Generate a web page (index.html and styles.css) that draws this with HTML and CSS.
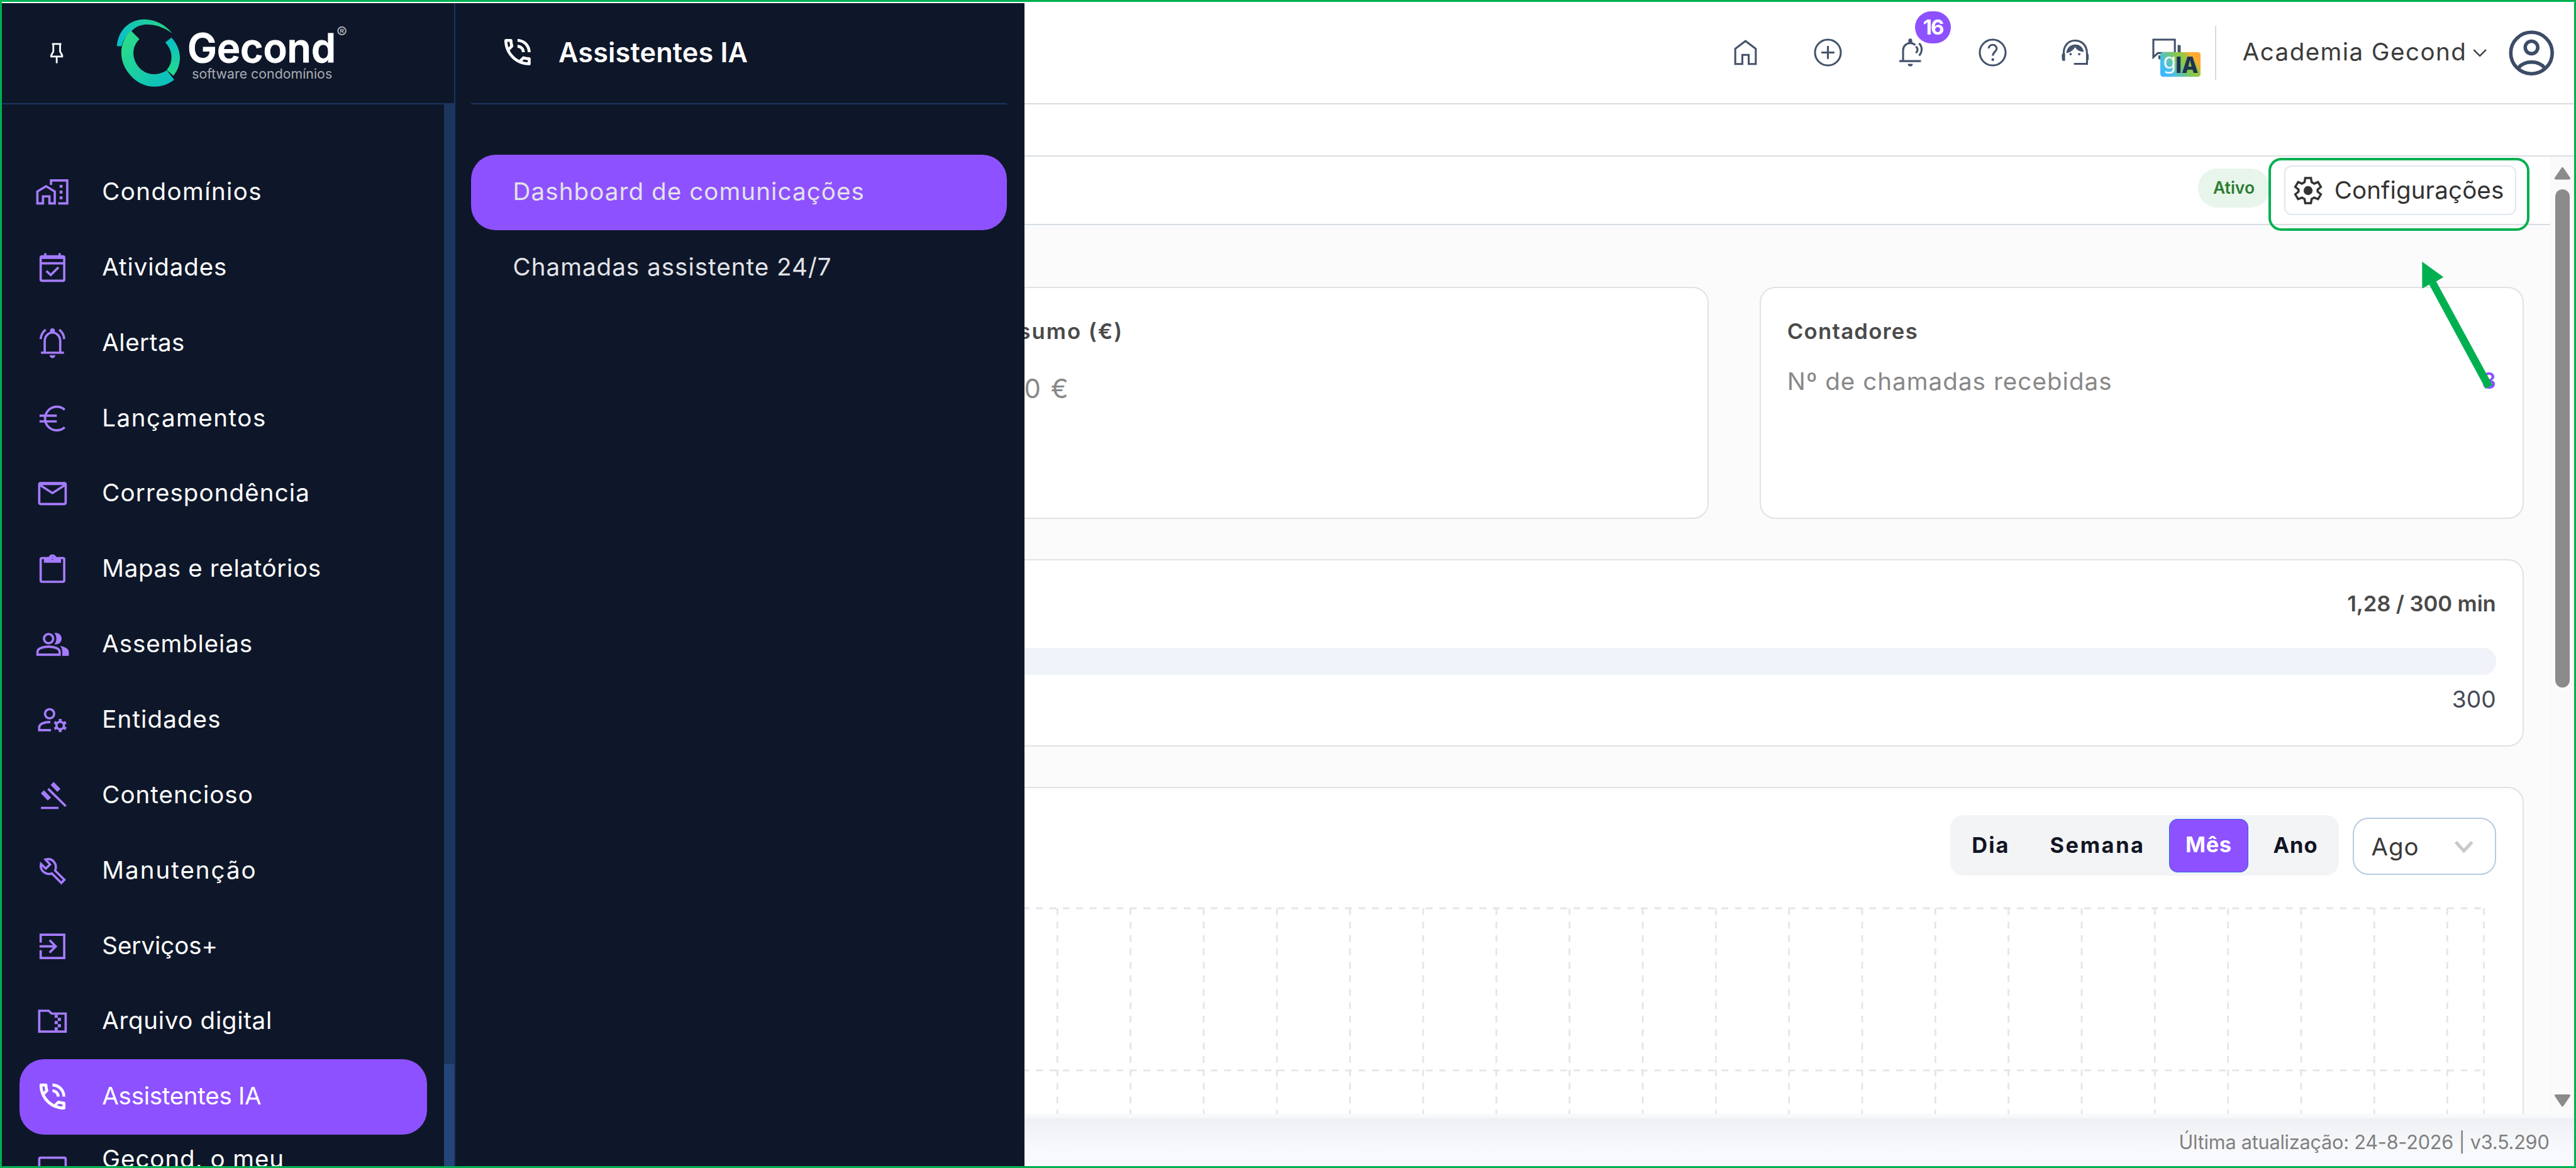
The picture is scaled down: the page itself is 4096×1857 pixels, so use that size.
FILE: index.html
```html
<!DOCTYPE html>
<html lang="pt">
<head>
<meta charset="utf-8">
<title>Gecond – Dashboard de comunicações</title>
<link rel="stylesheet" href="styles.css">
</head>
<body>
<div class="screen">

  <aside class="sidebar">
    <header class="brand">
      <svg class="pin" viewBox="0 0 24 36"><path d="M4 2H20M6.2 2V15L2.6 21.5V23.5H21.4V21.5L17.8 15V2M12 23.5V35"/></svg>
      <svg class="logo" viewBox="0 0 1260 405" role="img" aria-label="Gecond software condomínios">
        <defs>
          <linearGradient id="g1" x1="0" y1="0" x2="1" y2="1"><stop offset=".1" stop-color="#2adc88"/><stop offset="1" stop-color="#08bcc6"/></linearGradient>
          <linearGradient id="g2" x1="0" y1=".6" x2="1" y2=".4"><stop offset="0" stop-color="#0abfc8"/><stop offset="1" stop-color="#28d486"/></linearGradient>
          <linearGradient id="g3" x1="0" y1="0" x2="0" y2="1"><stop offset="0" stop-color="#07bdc8"/><stop offset="1" stop-color="#27dc8a"/></linearGradient>
        </defs>
        <path fill="url(#g2)" d="M32 166C38 84 96 28 175 28C235 30 285 60 316 100C270 66 220 52 175 55C142 60 122 72 108 88C80 110 62 140 56 166Z"/>
        <path fill="url(#g1)" d="M104 86L148 130C104 170 108 236 150 280C188 318 245 318 288 290L326 338C262 390 170 385 110 325C36 250 38 150 104 86Z"/>
        <path fill="url(#g3)" d="M280 147L312 122C366 180 370 260 322 318L288 288C325 245 318 185 280 147Z"/>
        <text class="logo-name" x="394" y="248" textLength="762" lengthAdjust="spacingAndGlyphs">Gecond</text>
        <text class="logo-sub" x="417" y="331" textLength="720" lengthAdjust="spacingAndGlyphs">software condomínios</text>
        <text class="logo-reg" x="1160" y="124">®</text>
      </svg>
    </header>
    <div class="nav-wrap">
      <nav class="nav">
        <a class="item"><svg class="ic" viewBox="0 0 24 24"><path d="M1.5 19.9V11.6L7.55 7.9L13.6 11.6V19.9H9.9V15H5.4V19.9ZM11 7V3.9H22.3V19.9H16"/><path class="f" d="M17 7h2v2h-2zM17 11h2v2h-2zM17 15h2v2h-2z"/></svg><span class="ls57">Condomínios</span></a>
        <a class="item"><svg class="ic" viewBox="0 0 24 24"><rect x="3.8" y="4.2" width="16.4" height="17" rx="1"/><path d="M3.8 9H20.2M7 4.2V2M17 4.2V2M7.8 14.4L10.8 17.2L16.2 11.8"/><path class="f" d="M4 4h16v2H4z"/></svg><span class="ls43">Atividades</span></a>
        <a class="item"><svg class="ic" viewBox="0 0 24 24"><path d="M6.6 18.6V10.6a5.4 5.9 0 0 1 10.8 0V18.6M4 18.7H20M3.8 9.2C4 6.4 5.2 4.300 7.300 2.700M20.200 9.200C20 6.400 18.800 4.300 16.700 2.700"/><path class="f" d="M10.300 5.200V3.400a1.700 1.700 0 0 1 3.400 0V5.200zM10 20.500h4a2 2 0 0 1-4 0z"/></svg><span class="ls33">Alertas</span></a>
        <a class="item"><svg class="ic" viewBox="0 0 24 24"><path d="M20.5 5.900A8.200 8.200 0 1 0 20.500 18.100M3 10H15M3 14H15"/></svg><span class="ls60">Lançamentos</span></a>
        <a class="item"><svg class="ic" viewBox="0 0 24 24"><rect x="2.800" y="4.800" width="18.400" height="14.600" rx="1"/><path d="M3 6L12 11.800L21 6"/><path class="f" d="M3 4.500h18v1.700H3z"/></svg><span class="ls49">Correspondência</span></a>
        <a class="item"><svg class="ic" viewBox="0 0 24 24"><rect x="3.800" y="4.500" width="16.400" height="16.500" rx="1"/><path class="f" fill-rule="evenodd" d="M6 4H9.300a2.800 2.800 0 0 1 5.400 0H18V7.800H6zM12 3.600a1 1 0 1 0 .01 0z"/></svg><span class="ls37">Mapas e relatórios</span></a>
        <a class="item"><svg class="ic" viewBox="0 0 24 24"><circle cx="9.300" cy="8" r="3.200"/><path d="M1.600 19.200V17.200C1.600 14.600 6 13.600 9.300 13.600S17 14.600 17 17.200V19.200Z"/><path class="f" d="M13.300 4.200a4 4 0 1 1 0 7.700c1.900-2 1.900-5.700 0-7.700zM17.300 13.100C20.500 13.700 23.400 15 23.400 17.300V20H18.800V17C18.800 15.300 18.200 14.100 17.300 13.100z"/></svg><span class="ls43">Assembleias</span></a>
        <a class="item"><svg class="ic" viewBox="0 0 24 24"><circle cx="10" cy="7.800" r="3.200"/><path d="M11 19.200H2.800V17.200C2.800 14.800 6.500 13.500 10.500 13.500"/><circle cx="17.400" cy="16" r="2.600"/><path stroke-width="2" d="M17.400 11.400v1.800M17.400 18.800v1.800M13.400 13.700l1.600.900M19.800 17.400l1.600.9M13.400 18.300l1.600-.9M19.800 14.600l1.600-.9"/></svg><span class="ls49">Entidades</span></a>
        <a class="item"><svg class="ic" viewBox="0 0 24 24"><path d="M4 20.800H16.200M9 7.500L21.300 19.600"/><path stroke-width="3" d="M11.800 3.800L16.500 8.600M5 9.600L9.900 14.600"/></svg><span class="ls47">Contencioso</span></a>
        <a class="item"><svg class="ic" viewBox="0 0 24 24"><path d="M13.900 11.900L20.300 18.300L18.200 20.500L11.600 13.900C7.500 15.200 3 12 4 7.300L7.400 10.500L10.300 7.600L7.200 4.200C12 2.700 15.600 7.200 13.900 11.900Z"/></svg><span class="ls72">Manutenção</span></a>
        <a class="item"><svg class="ic" viewBox="0 0 24 24"><path d="M3.800 9.500V4H20.200V20.200H3.800V14.800M3 12.100H14.200M10 7.800L14.300 12.100L10 16.400"/></svg><span class="ls19">Serviços+</span></a>
        <a class="item"><svg class="ic" viewBox="0 0 24 24"><path d="M2.800 19.300V4.800H9.400L11.400 6.800H21.200V19.300Z"/><path class="f" d="M13.500 7.500h2.200v2.200h-2.200zM15.700 9.700h2.200v2.200h-2.200zM13.500 11.900h2.200v2.200h-2.200zM15.700 14.100h2.200v2.200h-2.200zM13.500 16.300h2.200v2.200h-2.200z"/></svg><span class="ls38">Arquivo digital</span></a>
        <a class="item active"><svg class="ic" viewBox="0 0 24 24"><use href="#phone"/></svg><span class="ls13">Assistentes IA</span></a>
        <a class="item last"><svg class="ic" viewBox="0 0 24 24"><rect x="2.800" y="3.800" width="18.400" height="14" rx="1"/></svg><span class="ls45">Gecond, o meu</span></a>
      </nav>
      <div class="nav-scroll"><div class="nav-thumb"></div></div>
    </div>
  </aside>

  <section class="flyout">
    <header class="fly-head">
      <svg class="ic big" viewBox="0 0 24 24"><path id="phone" class="f" d="M19 12h2c0-4.970-4.030-9-9-9v2c3.870 0 7 3.130 7 7zm-4 0h2c0-2.760-2.240-5-5-5v2c1.660 0 3 1.340 3 3zM20 15.500c-1.250 0-2.450-.2-3.570-.57-.1-.03-.21-.05-.31-.05-.26 0-.51.1-.71.29l-2.200 2.200c-2.830-1.440-5.150-3.750-6.590-6.590l2.200-2.210c.28-.26.36-.65.25-1C8.700 6.450 8.500 5.250 8.500 4c0-.55-.45-1-1-1H4c-.55 0-1 .45-1 1 0 9.390 7.610 17 17 17 .55 0 1-.45 1-1v-3.500c0-.55-.45-1-1-1zM5.030 5h1.500c.07.88.22 1.750.46 2.590L5.790 8.800c-.41-1.210-.67-2.480-.76-3.800zM19 18.970c-1.320-.09-2.600-.35-3.800-.76l1.200-1.200c.85.24 1.720.39 2.600.45v1.510z"/></svg>
      <h2 class="ls25">Assistentes IA</h2>
    </header>
    <a class="sub active ls49">Dashboard de comunicações</a>
    <a class="sub ls47">Chamadas assistente 24/7</a>
  </section>

  <main class="main">
    <header class="topbar">
      <svg class="tic" viewBox="0 0 24 24"><path d="M4.600 20.300V9.300L12 3.700l7.400 5.600v11h-5.100v-6.600H9.700v6.600z"/></svg>
      <svg class="tic" viewBox="0 0 24 24"><circle cx="12" cy="12" r="9.300"/><path d="M12 7.300v9.400M7.300 12h9.400"/></svg>
      <div class="bell">
        <svg class="tic" viewBox="0 0 24 24"><path d="M4.100 18.200H19.700M6.800 18V10.500C6.800 7.500 9 5.200 12 5.200C13.500 5.200 14.600 5.700 15.600 6.600M18.400 5.400C20.800 8 20.800 11.600 18.400 14.200M16 7.600C17.700 9.200 17.700 10.700 16 12.300"/><path class="f" d="M10.600 5.500V3.300a1.400 1.400 0 0 1 2.800 0V5.500zM10.200 20.200h3.600a1.800 1.800 0 0 1-3.600 0z"/></svg>
        <span class="count">16</span>
      </div>
      <svg class="tic" viewBox="0 0 24 24"><circle cx="12" cy="12" r="9.300"/><path d="M9.100 9.100a2.900 2.700 0 0 1 5.800.1c0 2.100-2.800 2.600-2.800 5.100"/><circle class="f" cx="12.100" cy="17.100" r="1"/></svg>
      <svg class="tic" viewBox="0 0 24 24"><path d="M3.900 14.200C3.200 7.600 6.700 3.400 12 3.400S20.600 7.400 20.600 12.600V20.200H11.200"/><path class="f" d="M5.700 12.500C5.900 8.700 8.600 6.200 12 6.200c3.400 0 5.700 2.200 6.300 5.200C15.600 11.500 13.300 10.200 11.900 8.200C10.600 10.600 8.500 12 5.700 12.500zM4.800 12.600V18H3.600a1 1 0 0 1-1-1.100L2.400 14a1.400 1.400 0 0 1 1-1.400zM20 12.600h.8a1.400 1.400 0 0 1 1 1.400v2.500a1 1 0 0 1-1 1.200H20z"/><circle class="f" cx="8.800" cy="13.200" r=".9"/><circle class="f" cx="15" cy="13.200" r=".9"/></svg>
      <div class="chat">
        <svg class="tic" viewBox="0 0 24 24"><path d="M2.700 15.400V2.700H18.200V12.400H6Z"/><path class="f" d="M20.200 6.600h1.400a.8.8 0 0 1 .8.8V16h-2.200zM6.300 14h3v3H7.600a1.300 1.300 0 0 1-1.300-1.300z"/></svg>
        <svg class="gia" viewBox="0 0 69 42"><defs><linearGradient id="gb" x1="0" y1=".7" x2="1" y2=".2"><stop offset="0" stop-color="#3db8ff"/><stop offset=".2" stop-color="#4cbfe0"/><stop offset=".55" stop-color="#85c94c"/><stop offset=".72" stop-color="#a4c440"/><stop offset=".86" stop-color="#ffab33"/><stop offset="1" stop-color="#ffa72e"/></linearGradient></defs><rect width="69" height="42" rx="5" fill="url(#gb)"/><text class="gia-g" x="4.500" y="28">g</text><text class="gia-ia" x="26" y="35" textLength="39" lengthAdjust="spacingAndGlyphs">IA</text></svg>
      </div>
      <div class="account">
        <span class="ls58">Academia Gecond</span>
        <svg class="chev" viewBox="0 0 24 24"><path d="M1.500 6.500L12 17L22.500 6.500"/></svg>
        <svg class="avatar" viewBox="0 0 78 78"><circle cx="39" cy="39" r="35.500"/><circle cx="39" cy="29.500" r="10.700"/><path d="M16 65C27 51 51 51 62 65"/></svg>
      </div>
    </header>
    <div class="subbar"></div>

    <div class="body">
      <div class="content">
        <div class="titlebar">
          <span class="badge">Ativo</span>
          <div class="config">
            <svg class="gear" viewBox="0 0 24 24"><path d="M9.900 2.800h4.200l.5 3 1.900 1.100 2.800-1.200 2.100 3.600-2.400 1.900v1.600l2.400 1.900-2.100 3.600-2.800-1.200-1.900 1.100-.5 3H9.900l-.5-3-1.900-1.100-2.800 1.200-2.100-3.600L5 12.800v-1.600L2.600 9.300l2.100-3.600 2.800 1.200 1.900-1.100z"/><circle class="f" cx="12" cy="12" r="3.300"/></svg>
            <span class="ls24">Configurações</span>
            <div class="highlight"></div>
          </div>
        </div>
        <div class="cards">
          <article class="card"><h3 class="ls82">Consumo (€)</h3><p class="amount">0,00 €</p></article>
          <article class="card"><h3 class="ls58">Contadores</h3><p class="counter"><span class="ls48">Nº de chamadas recebidas</span><b>3</b></p></article>
        </div>
        <article class="card usage">
          <p class="total ls18">1,28 / 300 min</p>
          <div class="bar"></div>
          <p class="max">300</p>
        </article>
        <article class="card chart">
          <div class="filters">
            <div class="seg"><span class="dia">Dia</span><span class="sem">Semana</span><span class="mes">Mês</span><span class="ano">Ano</span></div>
            <div class="select"><span class="ls45">Ago</span><svg class="chev grey" viewBox="0 0 34 24"><path d="M3 4L17 19L31 4"/></svg></div>
          </div>
          <svg class="grid" viewBox="1662 1540 2607 380">
            <path stroke-dashoffset="-3" d="M1676 1554H4249M1676 1831.500H4249"/>
            <path d="M1807.600 1554V1930M1932.800 1554V1930M2058 1554V1930M2183.200 1554V1930M2308.400 1554V1930M2433.600 1554V1930M2558.800 1554V1930M2684 1554V1930M2809.200 1554V1930M2934.400 1554V1930M3059.600 1554V1930M3184.800 1554V1930M3310 1554V1930M3435.200 1554V1930M3560.400 1554V1930M3685.600 1554V1930M3810.800 1554V1930M3936 1554V1930M4061.200 1554V1930M4186 1554V1930M4248.500 1554V1930"/>
          </svg>
        </article>
      </div>
      <div class="scroll">
        <svg class="tri" viewBox="0 0 29 23"><path d="M14.500 3L26 20H3Z"/></svg>
        <div class="thumb"></div>
        <svg class="tri down" viewBox="0 0 29 23"><path d="M14.500 20L26 3H3Z"/></svg>
      </div>
    </div>
    <footer class="foot">Última atualização: 24-8-2026 | v3.5.290</footer>
  </main>

  <svg class="arrow" viewBox="4130 440 150 240"><path d="M4145.400 448.700L4182 475L4169.500 482.500L4266 659.700L4254 666L4157.600 488L4145.500 494.500Z"/></svg>
</div>
</body>
</html>
```
FILE: styles.css
```css
html { font-size: 92.92px; }
* { box-sizing: border-box; margin: 0; padding: 0; }
body { font-family: Inter, "Open Sans", sans-serif; font-size: .415rem; overflow: hidden; background: #fff; }
svg { display: block; flex: none; }

.screen {
  position: relative;
  height: 100vh;
  display: grid;
  grid-template-columns: 7.755rem 9.74rem minmax(0, 1fr);
  grid-template-rows: minmax(0, 1fr);
  border: .04rem solid #00b050;
  border-left-width: .035rem;
  border-right-width: .035rem;
  padding-top: .02rem;
}

/* letter-spacing steps for the labels */
.ls13 { letter-spacing: -.008em; } .ls18 { letter-spacing: -.003em; }
.ls19 { letter-spacing: -.002em; } .ls24 { letter-spacing: .003em; }
.ls25 { letter-spacing: .004em; }  .ls33 { letter-spacing: .012em; }
.ls37 { letter-spacing: .016em; }  .ls38 { letter-spacing: .017em; }
.ls43 { letter-spacing: .022em; }  .ls45 { letter-spacing: .024em; }
.ls47 { letter-spacing: .026em; }  .ls48 { letter-spacing: .027em; }
.ls49 { letter-spacing: .028em; }  .ls57 { letter-spacing: .036em; }
.ls58 { letter-spacing: .037em; }  .ls60 { letter-spacing: .039em; }
.ls72 { letter-spacing: .051em; }  .ls82 { letter-spacing: .058em; }

/* icons */
.ic { width: .59rem; height: .59rem; fill: none; stroke: currentColor; stroke-width: 1.6; }
.ic.big { width: .6rem; height: .6rem; }
.f { fill: currentColor; stroke: none; }

/* sidebar */
.sidebar { background: #0e1729; color: #fff; display: flex; flex-direction: column; border-right: .025rem solid #1a355f; min-height: 0; }
.brand { height: 1.73rem; flex: none; display: flex; border-bottom: .025rem solid #1a355f; }
.pin { width: .24rem; height: .36rem; margin: .68rem 0 0 .82rem; fill: none; stroke: #fff; stroke-width: 3; }
.logo { width: 4.2rem; height: 1.35rem; margin: .19rem 0 0 .805rem; }
.logo-name { font-size: 206px; font-weight: 600; fill: #fff; stroke: #fff; stroke-width: 3; }
.logo-sub { font-size: 68px; fill: #a9acb4; }
.logo-reg { font-size: 80px; fill: #b5b8c0; }
.nav-wrap { flex: 1; display: flex; min-height: 0; }
.nav { flex: 1; overflow: hidden; padding: .86rem .29rem 0 .305rem; }
.item { display: flex; align-items: center; height: 1.29rem; padding-left: .265rem; gap: .555rem; border-radius: .42rem; color: #a57cff; white-space: nowrap; }
.item span { color: #fff; margin-top: -.03rem; }
.item.active { background: #8e51ff; color: #fff; }
.item.last { align-items: flex-start; }
.item.last .ic { margin-top: .31rem; }
.item.last span { line-height: .5rem; margin-top: .17rem; }
.nav-scroll { width: .17rem; background: #1b355d; display: flex; align-items: flex-end; }
.nav-thumb { width: 100%; height: 1.74rem; background: #24457a; }

/* flyout menu */
.flyout { background: #0e1729; color: #e2e3e8; padding: 0 .3rem 0 .275rem; }
.fly-head { height: 1.73rem; display: flex; align-items: center; gap: .405rem; padding: 0 0 .02rem .49rem; margin-bottom: .865rem; border-bottom: .025rem solid #1a355f; color: #fff; }
.fly-head h2 { font-size: .465rem; font-weight: 600; }
.sub { display: flex; align-items: center; height: 1.29rem; padding: 0 0 .04rem .715rem; border-radius: .42rem; white-space: nowrap; }
.sub.active { background: #8e51ff; }

/* main */
.main { display: flex; flex-direction: column; min-width: 0; min-height: 0; background: #fff; }
.topbar { height: 1.73rem; flex: none; display: flex; justify-content: flex-end; align-items: center; padding: 0 .255rem .01rem 0; border-bottom: .025rem solid #dcdcdc; gap: .84rem; color: #44536b; }
.tic { width: .57rem; height: .57rem; fill: none; stroke: currentColor; stroke-width: 1.4; }
.bell, .chat { position: relative; }
.count { position: absolute; left: .36rem; top: -.42rem; width: .62rem; height: .55rem; border-radius: .275rem; background: #8e51ff; color: #fff; font-size: .355rem; font-weight: 700; line-height: .54rem; text-align: center; letter-spacing: -.06em; }
.chat { margin-left: .15rem; }
.gia { position: absolute; left: .175rem; top: .28rem; width: .69rem; height: .42rem; }
.gia-g { font: 37px "Noto Sans", sans-serif; fill: #fff; opacity: .9; }
.gia-ia { font-size: 38px; font-weight: 800; fill: #1c3452; }
.account { display: flex; align-items: center; height: .92rem; margin-left: -.29rem; padding-left: .445rem; border-left: .025rem solid #d9d9d9; color: #3c3c3c; }
.account span { width: 3.945rem; margin-top: -.03rem; white-space: nowrap; }
.chev { width: .24rem; height: .24rem; fill: none; stroke: #3c3c3c; stroke-width: 2.6; }
.avatar { width: .78rem; height: .78rem; margin: 0 .08rem 0 .375rem; fill: none; stroke: #3d4c66; stroke-width: 6; }
.subbar { height: .9rem; flex: none; border-bottom: .03rem solid #dadfe3; }
.body { flex: 1; display: flex; min-height: 0; }
.content { flex: 1; min-width: 0; overflow: hidden; background: #fbfbfb; }
.titlebar { height: 1.17rem; display: flex; justify-content: flex-end; align-items: center; gap: .245rem; padding-right: .585rem; background: #fff; border-bottom: .025rem solid #d8dee3; }
.badge { width: 1.235rem; height: .665rem; margin-bottom: .08rem; border-radius: .33rem; background: #e8f5eb; color: #2c7d32; font-size: .285rem; font-weight: 600; line-height: .665rem; text-align: center; }
.config { position: relative; display: flex; align-items: center; width: 3.965rem; height: .85rem; padding-left: .11rem; border: .025rem solid #e2e6ef; border-radius: .13rem; color: #333; }
.config span { margin: -.02rem 0 0 .165rem; }
.gear { width: .56rem; height: .56rem; fill: none; stroke: #333; stroke-width: 1.6; }
.highlight { position: absolute; inset: -.155rem -.25rem -.285rem -.29rem; border: .05rem solid #00b050; border-radius: .22rem; }

.card { background: #fff; border: .025rem solid #e2e2e2; border-radius: .27rem; padding: 0 .455rem; white-space: nowrap; }
.cards { display: grid; grid-template-columns: 13.08rem 13.08rem; gap: .87rem; margin: 1.06rem 0 .69rem -1.37rem; }
.cards .card { height: 3.965rem; padding-top: .485rem; }
.card h3 { font-size: .373rem; font-weight: 600; line-height: .5rem; color: #4a4a4a; }
.amount { width: 1.67rem; margin-top: .46rem; font-size: .45rem; line-height: .54rem; letter-spacing: .05em; color: #888; text-align: right; }
.counter { display: flex; justify-content: space-between; margin-top: .36rem; line-height: .5rem; color: #888; }
.counter b { font-weight: 600; font-size: .38rem; color: #8e51ff; }
.usage, .chart { width: 27.03rem; margin-left: -1.37rem; text-align: right; }
.usage { height: 3.205rem; margin-bottom: .69rem; padding-top: .49rem; }
.total { font-size: .373rem; font-weight: 600; line-height: .5rem; color: #4a4a4a; }
.bar { height: .46rem; margin: .505rem 0 .18rem; border-radius: .22rem; background: #f0f3f9; }
.max { font-size: .4rem; line-height: .5rem; color: #454a55; }
.chart { padding-top: .465rem; height: 6.5rem; }
.filters { display: flex; justify-content: flex-end; align-items: center; gap: .23rem; height: 1.03rem; }
.seg { display: flex; align-items: center; width: 6.65rem; height: 1.03rem; padding: 0 .04rem .01rem .085rem; border-radius: .22rem; background: #f3f4f6; color: #111523; font-size: .37rem; font-weight: 700; text-align: center; }
.dia { width: 1.22rem; letter-spacing: .06em; }
.sem { width: 2.46rem; letter-spacing: .075em; }
.mes { width: 1.375rem; height: .92rem; line-height: .87rem; margin-top: .02rem; border: .02rem solid #2563eb; border-radius: .14rem; background: #8e51ff; color: #fff; letter-spacing: .02em; }
.ano { width: 1.42rem; margin-left: .1rem; letter-spacing: .03em; }
.select { display: flex; justify-content: space-between; align-items: center; width: 2.455rem; height: .98rem; margin-top: .04rem; padding: 0 .36rem 0 .3rem; border: .025rem solid #b8cce0; border-radius: .27rem; color: #3a3a3a; }
.chev.grey { width: .34rem; stroke: #c9c9c9; stroke-width: 5.5; }
.grid { width: 26.07rem; height: 3.8rem; margin-top: .425rem; fill: none; stroke: #e4e4eb; stroke-width: 3; stroke-dasharray: 11.5; }

.scroll { width: .41rem; flex: none; display: flex; flex-direction: column; align-items: center; padding: .165rem 0 .12rem; background: #fafafa; border-left: .01rem solid #f7f7f7; }
.tri { width: .29rem; height: .23rem; fill: #8b8b8b; stroke: #8b8b8b; stroke-width: 4; stroke-linejoin: round; }
.thumb { width: .25rem; height: 8.53rem; margin-top: .16rem; border-radius: .125rem; background: #8b8b8b; }
.down { margin-top: auto; }
.foot { height: .89rem; flex: none; padding: .05rem .425rem 0; line-height: .87rem; text-align: right; font-size: .33rem; letter-spacing: -.0075em; color: #808080; background: linear-gradient(#f8f9fb 0, #f8f9fb .05rem, #eef0f3 .09rem, #f8f9fc .6rem); }

/* callout arrow over the cards */
.arrow { position: absolute; left: 41.265rem; top: 4.36rem; width: 1.5rem; height: 2.4rem; fill: #00b050; }
```
